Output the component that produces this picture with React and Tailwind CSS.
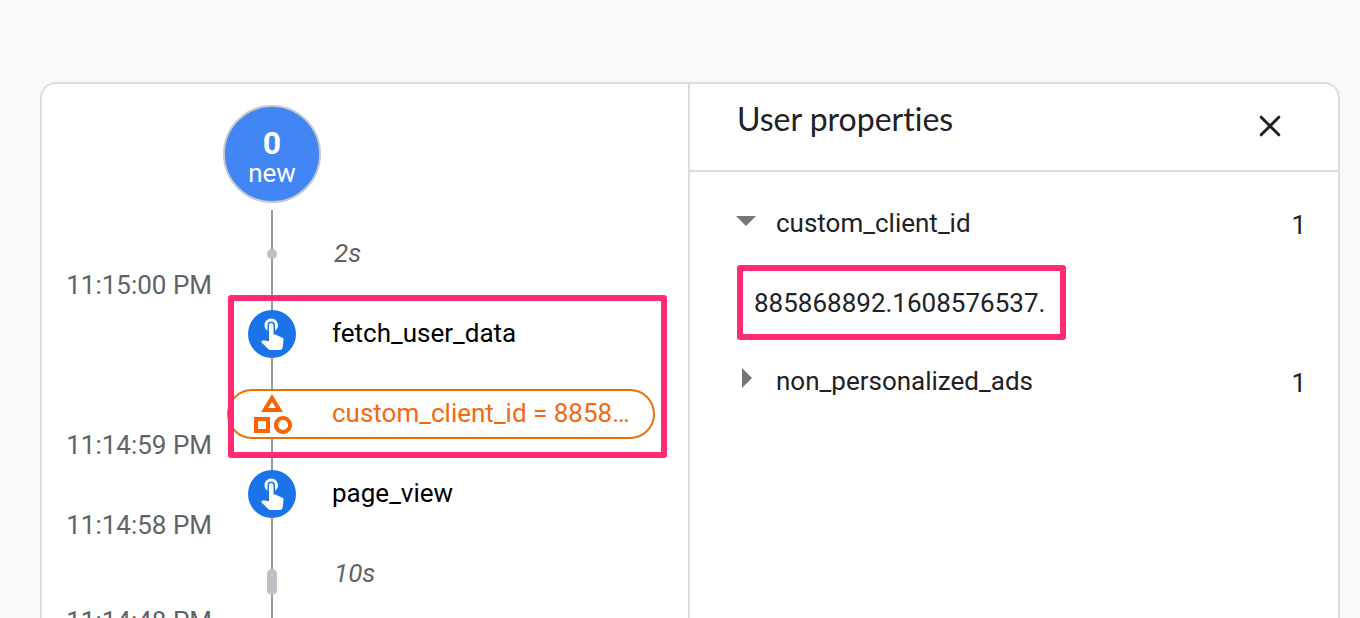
import React from "react";
import { MdTouchApp, MdOutlineCategory } from "react-icons/md";

function TouchBadge() {
  return (
    <span className="flex size-12 items-center justify-center rounded-full bg-[#1a73e8] pb-[5px] text-white">
      <MdTouchApp size={36} />
    </span>
  );
}

function TimelineRow({ marker, children, muted }) {
  return (
    <div className="flex h-20 items-center">
      <div className="flex w-[90px] justify-center">{marker}</div>
      <div className={muted ? "ml-[17px] pb-px italic text-[#5f6368]" : "ml-[15px] pb-px text-black"}>{children}</div>
    </div>
  );
}

function Timeline() {
  return (
    <section className="flex w-[648px] shrink-0 border-r-2 border-[#dadce0]">
      <div className="flex w-[170px] shrink-0 flex-col pt-[161px] text-right text-[#5f6368]">
        <time className="h-40 leading-20">11:15:00 PM</time>
        <time className="h-20 leading-20">11:14:59 PM</time>
        <time className="h-24 leading-20">11:14:58 PM</time>
        <time className="h-20 leading-20">11:14:48 PM</time>
      </div>

      <div className="relative ml-[15px] w-[440px] shrink-0 pt-[21px]">
        <div className="ml-[-4px] flex size-[98px] flex-col items-center rounded-full border-2 border-[#c6c9cc] bg-[#4285f4] pt-[19px] text-white">
          <span className="text-[32px] leading-[34px] font-bold">0</span>
          <span className="leading-[26px]">new</span>
        </div>

        <div className="mt-[7px] grid">
          <div className="ml-[44px] h-[410px] w-0.5 bg-[#9a9a9a] [grid-area:1/1]" />
          <div className="z-10 flex flex-col pt-1 [grid-area:1/1]">
            <TimelineRow muted marker={<span className="size-2.5 rounded-full bg-[#bdbfc1]" />}>
              2s
            </TimelineRow>
            <TimelineRow marker={<TouchBadge />}>fetch_user_data</TimelineRow>
            <div className="flex h-20 items-center">
              <div className="flex h-[50px] w-[428px] items-center rounded-full border-2 border-[#e8710a] bg-white pl-[19px] text-[#f4690f]">
                <MdOutlineCategory size={48} className="shrink-0 text-[#fa6400]" />
                <span className="ml-9 pb-px">custom_client_id = 8858…</span>
              </div>
            </div>
            <TimelineRow marker={<TouchBadge />}>page_view</TimelineRow>
            <TimelineRow muted marker={<span className="mt-4 h-[26px] w-2.5 rounded-full bg-[#bdc1c6]" />}>
              10s
            </TimelineRow>
          </div>
        </div>

        <div className="pointer-events-none absolute top-[211px] left-px z-20 h-[163px] w-[439px] rounded-[3px] border-6 border-[#ff2d6f]" />
      </div>
    </section>
  );
}

function Properties() {
  return (
    <section className="flex-1 text-[#202124]">
      <header className="flex h-[88px] items-start justify-between border-b-2 border-[#dadce0] pr-[56px] pl-[47px]">
        <h2 className="pt-[15px] font-['Lato',sans-serif] text-[32px] leading-10 [font-variant-ligatures:none]">
          User properties
        </h2>
        <svg
          viewBox="0 0 24 24"
          className="mt-[30px] size-6"
          fill="none"
          stroke="currentColor"
          strokeWidth="3"
          strokeLinecap="round"
        >
          <path d="M3.2 3.2 20.8 20.8M20.8 3.2 3.2 20.8" />
        </svg>
      </header>

      <div className="pt-[31px] pr-8 pl-[47px]">
        <div className="flex h-10 items-center">
          <svg viewBox="0 0 20 10" className="-ml-px mb-1 h-2.5 w-5 fill-[#757575]">
            <path d="M0 0H20L10 10Z" />
          </svg>
          <span className="ml-5">custom_client_id</span>
          <span className="mt-1 ml-auto">1</span>
        </div>
        <div className="mt-[22px] flex h-[75px] w-[329px] items-center rounded-[3px] border-6 border-[#ff2d6f] pt-px pl-[11px]">
          885868892.1608576537.
        </div>
        <div className="mt-[21px] flex h-10 items-center">
          <svg viewBox="0 0 10 20" className="mr-[5px] mb-1.5 ml-[5px] h-5 w-2.5 fill-[#757575]">
            <path d="M0 0V20L10 10Z" />
          </svg>
          <span className="ml-[19px]">non_personalized_ads</span>
          <span className="mt-1 ml-auto">1</span>
        </div>
      </div>
    </section>
  );
}

export default function App() {
  return (
    <main className="h-[618px] overflow-hidden bg-[#f8f9fa] pt-[82px] pl-10 font-['Roboto',sans-serif] text-[26px]">
      <div className="flex h-[600px] w-[1300px] overflow-hidden rounded-2xl border-2 border-[#dadce0] bg-white">
        <Timeline />
        <Properties />
      </div>
    </main>
  );
}
